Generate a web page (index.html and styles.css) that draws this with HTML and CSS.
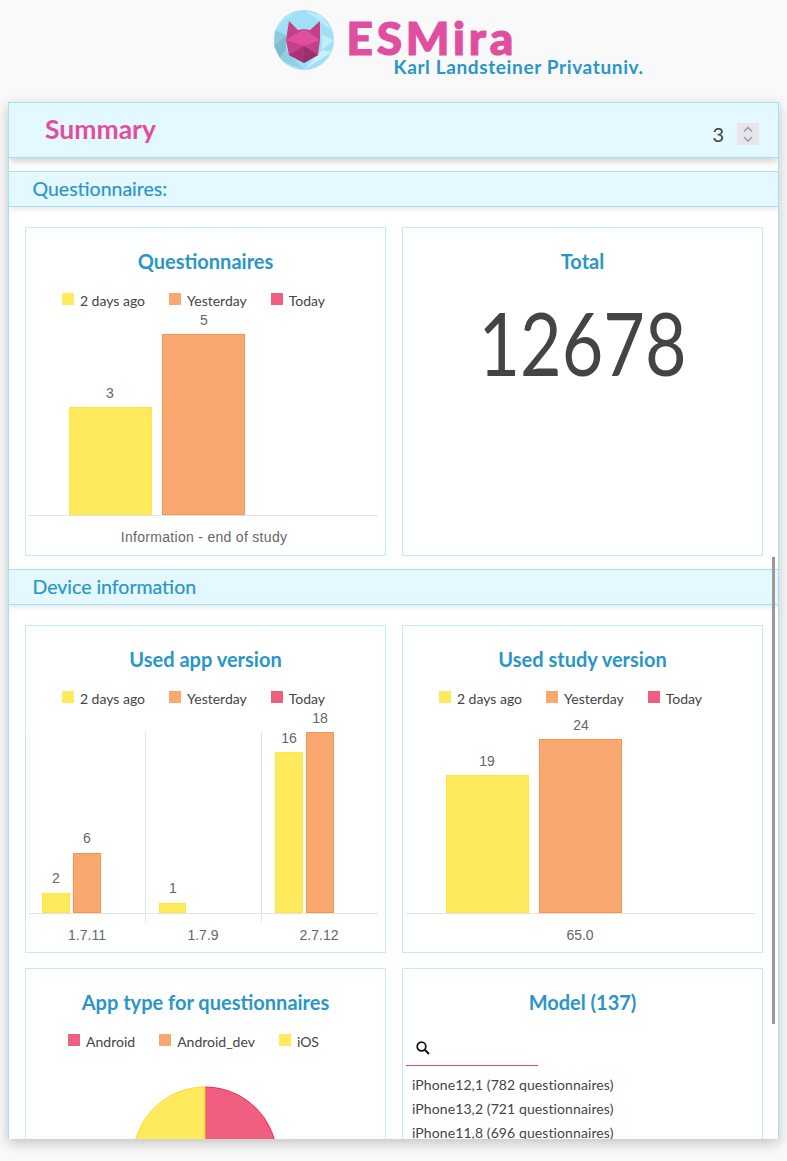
FILE: index.html
```html
<!DOCTYPE html>
<html lang="en">
<head>
    <meta charset="UTF-8">
    <meta name="viewport" content="width=device-width, initial-scale=1.0">
    <title>ESMira - Summary</title>
    <link rel="stylesheet" href="styles.css">
</head>
<body>
    <header class="site-header">
        <div class="logo">
            <svg class="logo-icon" width="60" height="60" viewBox="0 0 60 60">
                <circle cx="30" cy="30" r="30" fill="#9fe0f6"/>
                <polygon points="30,0 11,6 1,20 12,9" fill="#a8e6fa"/>
                <polygon points="30,0 48,6 59,22 45,11" fill="#b9ebfa"/>
                <polygon points="1,20 0,36 12,25" fill="#8accdf"/>
                <polygon points="0,36 12,25 12,40 6,48" fill="#7fbccf"/>
                <polygon points="12,40 29,59 12,53 6,48" fill="#8fd0e4"/>
                <polygon points="48,25 60,30 48,40" fill="#bdeefa"/>
                <polygon points="48,40 58,42 31,59" fill="#c8f1fb"/>
                <polygon points="15,11 24,20 30,19 36,20 46,11 46,30 44,45 30,53 15,45 12,30" fill="#c63f8b"/>
                <polygon points="30,19 46,30 30,36 12,30" fill="#df4f9e"/>
                <polygon points="15,45 30,36 30,53" fill="#a83476"/>
                <polygon points="44,45 30,36 30,53" fill="#97306b"/>
            </svg>
            <div class="logo-text">
                <div class="logo-name">ESMira</div>
                <div class="logo-sub">Karl Landsteiner Privatuniv.</div>
            </div>
        </div>
    </header>

    <main class="window">
        <div class="title-bar">
            <h1>Summary</h1>
            <div class="stepper">
                <span class="stepper-value">3</span>
                <span class="stepper-btn">
                    <svg width="22" height="22" viewBox="0 0 22 22">
                        <path d="M7 8.5 L11 4.5 L15 8.5 M7 14 L11 18 L15 14" fill="none" stroke="#a09cac" stroke-width="1.6"/>
                    </svg>
                </span>
            </div>
        </div>

        <h2 class="section-head first">Questionnaires:</h2>
        <div class="card-grid top-grid">
            <section class="card">
                <h3>Questionnaires</h3>
                <div class="legend">
                    <span class="legend-item"><i class="swatch yellow"></i>2 days ago</span>
                    <span class="legend-item"><i class="swatch orange"></i>Yesterday</span>
                    <span class="legend-item"><i class="swatch pink"></i>Today</span>
                </div>
                <svg class="chart" width="359" height="245" viewBox="0 0 359 245">
                    <rect class="bar-y" x="43.5" y="97.5" width="82" height="107"/>
                    <rect class="bar-o" x="136.5" y="24.5" width="82" height="180"/>
                    <line class="axis" x1="3" y1="205.5" x2="352" y2="205.5"/>
                    <text class="val" x="84" y="88">3</text>
                    <text class="val" x="178" y="15">5</text>
                    <text class="cat long" x="178" y="232">Information - end of study</text>
                </svg>
            </section>
            <section class="card">
                <h3>Total</h3>
                <div class="big-number">12678</div>
            </section>
        </div>

        <h2 class="section-head">Device information</h2>
        <div class="card-grid">
            <section class="card">
                <h3>Used app version</h3>
                <div class="legend">
                    <span class="legend-item"><i class="swatch yellow"></i>2 days ago</span>
                    <span class="legend-item"><i class="swatch orange"></i>Yesterday</span>
                    <span class="legend-item"><i class="swatch pink"></i>Today</span>
                </div>
                <svg class="chart" width="359" height="245" viewBox="0 0 359 245">
                    <line class="grid faint" x1="3.5" y1="24" x2="3.5" y2="214"/>
                    <line class="grid" x1="119.5" y1="24" x2="119.5" y2="214"/>
                    <line class="grid" x1="235.5" y1="24" x2="235.5" y2="214"/>
                    <rect class="bar-y" x="16.5" y="185.5" width="27" height="19"/>
                    <rect class="bar-o" x="47.5" y="145.5" width="27" height="59"/>
                    <rect class="bar-y" x="133.5" y="195.5" width="26" height="9"/>
                    <rect class="bar-y" x="249.5" y="44.5" width="27" height="160"/>
                    <rect class="bar-o" x="280.5" y="24.5" width="27" height="180"/>
                    <line class="axis" x1="3" y1="205.5" x2="352" y2="205.5"/>
                    <text class="val" x="30" y="175">2</text>
                    <text class="val" x="61" y="135">6</text>
                    <text class="val" x="147" y="185">1</text>
                    <text class="val" x="263" y="35">16</text>
                    <text class="val" x="294" y="15">18</text>
                    <text class="cat" x="61" y="232">1.7.11</text>
                    <text class="cat" x="177" y="232">1.7.9</text>
                    <text class="cat" x="293" y="232">2.7.12</text>
                </svg>
            </section>
            <section class="card">
                <h3>Used study version</h3>
                <div class="legend">
                    <span class="legend-item"><i class="swatch yellow"></i>2 days ago</span>
                    <span class="legend-item"><i class="swatch orange"></i>Yesterday</span>
                    <span class="legend-item"><i class="swatch pink"></i>Today</span>
                </div>
                <svg class="chart" width="359" height="245" viewBox="0 0 359 245">
                    <rect class="bar-y" x="43.5" y="67.5" width="82" height="137"/>
                    <rect class="bar-o" x="136.5" y="31.5" width="82" height="173"/>
                    <line class="axis" x1="3" y1="205.5" x2="352" y2="205.5"/>
                    <text class="val" x="84" y="58">19</text>
                    <text class="val" x="178" y="22">24</text>
                    <text class="cat" x="177" y="232">65.0</text>
                </svg>
            </section>
            <section class="card">
                <h3>App type for questionnaires</h3>
                <div class="legend">
                    <span class="legend-item"><i class="swatch pink"></i>Android</span>
                    <span class="legend-item"><i class="swatch orange"></i>Android_dev</span>
                    <span class="legend-item"><i class="swatch yellow"></i>iOS</span>
                </div>
                <svg class="chart" width="359" height="245" viewBox="0 0 359 245">
                    <path d="M179 36 A72 72 0 0 1 179 180 Z" fill="#f05e80" stroke="#e8275f"/>
                    <path d="M179 36 A72 72 0 0 0 179 180 Z" fill="#ffe95c" stroke="#ffd92e"/>
                </svg>
            </section>
            <section class="card">
                <h3>Model (137)</h3>
                <div class="search">
                    <svg width="16" height="16" viewBox="0 0 16 16">
                        <circle cx="6.5" cy="6.5" r="4.3" fill="none" stroke="#111" stroke-width="1.7"/>
                        <line x1="9.8" y1="9.8" x2="14" y2="14" stroke="#111" stroke-width="2"/>
                    </svg>
                </div>
                <ul class="model-list">
                    <li>iPhone12,1 (782 questionnaires)</li>
                    <li>iPhone13,2 (721 questionnaires)</li>
                    <li>iPhone11,8 (696 questionnaires)</li>
                </ul>
            </section>
        </div>

        <div class="scroll-thumb"></div>
    </main>
</body>
</html>
```

FILE: styles.css
```css
* {
    box-sizing: border-box;
}
html, body {
    height: 100%;
    overflow: hidden;
}
body {
    margin: 0;
    background-color: #f9f9f9;
    font-family: Lato, "Open Sans", sans-serif;
    color: #444;
}
.site-header {
    height: 102px;
    padding-top: 10px;
}
.logo {
    display: flex;
    width: 240px;
    margin: 0 auto;
}
.logo-icon {
    flex: none;
}
.logo-text {
    margin-left: 13px;
}
.logo-name {
    margin-top: 7px;
    font-size: 46px;
    font-weight: 900;
    line-height: 42px;
    letter-spacing: 3.8px;
    color: #e04f9f;
    -webkit-text-stroke: 1.2px #e04f9f;
}
.logo-sub {
    margin-left: 47px;
    margin-top: -2px;
    font-size: 19px;
    font-weight: 700;
    line-height: 20px;
    letter-spacing: 0.63px;
    color: #2a96c8;
    white-space: nowrap;
}
.window {
    position: relative;
    width: 771px;
    height: 1037px;
    margin-left: 8px;
    background-color: white;
    border: 1px solid #a0e2f6;
    border-bottom-width: 0;
    box-shadow: 0 4px 12px rgba(0, 0, 0, 0.22);
    overflow: hidden;
}
.title-bar {
    display: flex;
    justify-content: space-between;
    align-items: center;
    height: 55px;
    padding: 0 19px 0 36px;
    background-color: #e3f8ff;
    border-bottom: 1px solid #a0e2f6;
    box-shadow: 0 3px 8px rgba(0, 0, 0, 0.2);
}
.title-bar h1 {
    margin: 0 0 2px;
    font-size: 26.5px;
    font-weight: 700;
    color: #e04f9f;
}
.stepper {
    display: flex;
    align-items: center;
    gap: 13px;
    margin-top: 8px;
}
.stepper-value {
    font-size: 20px;
}
.stepper-btn {
    display: block;
    width: 22px;
    height: 22px;
    background-color: #e8e6ec;
}
.section-head {
    height: 36px;
    margin: 0;
    padding-left: 23.5px;
    font-size: 19.5px;
    font-weight: 400;
    line-height: 33px;
    color: #2a96c8;
    -webkit-text-stroke: 0.2px #2a96c8;
    background-color: #e3f8ff;
    border-top: 1px solid #a0e2f6;
    border-bottom: 1px solid #a0e2f6;
    box-shadow: 0 2px 6px rgba(0, 0, 0, 0.1);
}
.section-head.first {
    margin-top: 13px;
}
.card-grid {
    display: grid;
    grid-template-columns: 361px 361px;
    gap: 15px 16px;
    padding: 20px 16px 14px;
}
.card {
    height: 328px;
    border: 1px solid #c0ecfa;
    overflow: hidden;
}
.top-grid {
    padding-bottom: 13px;
}
.top-grid .card {
    height: 329px;
}
.card h3 {
    height: 45px;
    margin: 0;
    padding-top: 21px;
    font-size: 20px;
    font-weight: 700;
    line-height: 24px;
    text-align: center;
    color: #2a96c8;
}
.legend {
    display: flex;
    justify-content: center;
    align-items: center;
    height: 37px;
    padding-top: 18px;
    font-size: 14px;
}
.legend-item {
    display: flex;
    align-items: center;
    gap: 6px;
    margin-right: 24px;
}
.swatch {
    display: block;
    width: 12px;
    height: 12px;
    margin-bottom: 4px;
}
.swatch.yellow {
    background-color: #ffe95c;
}
.swatch.orange {
    background-color: #f9a870;
}
.swatch.pink {
    background-color: #f05e80;
}
.chart {
    display: block;
}
.chart text {
    font-family: "Liberation Sans", Arial, sans-serif;
    font-size: 14px;
    text-anchor: middle;
    fill: #666;
}
.chart .long {
    letter-spacing: 0.3px;
}
.bar-y {
    fill: #ffe95c;
    stroke: #ffe640;
}
.bar-o {
    fill: #f9a870;
    stroke: #f8934f;
}
.axis, .grid {
    stroke: #e3e3e3;
}
.grid.faint {
    stroke: #f5f5f5;
}
.big-number {
    margin-top: 19px;
    font-size: 88px;
    line-height: 100px;
    text-align: center;
    color: #444;
    transform: scaleX(0.815);
}
.search {
    width: 132px;
    height: 32px;
    margin: 20px 0 0 3px;
    padding: 6px 0 0 9px;
    border-bottom: 1px solid #c7508f;
}
.search svg {
    display: block;
}
.model-list {
    margin: 7px 0 0;
    padding: 0 0 0 9px;
    list-style: none;
    font-size: 14px;
    line-height: 24px;
    letter-spacing: 0.1px;
}
.scroll-thumb {
    position: absolute;
    top: 454px;
    right: 3px;
    width: 3px;
    height: 467px;
    background-color: #999;
}
```
